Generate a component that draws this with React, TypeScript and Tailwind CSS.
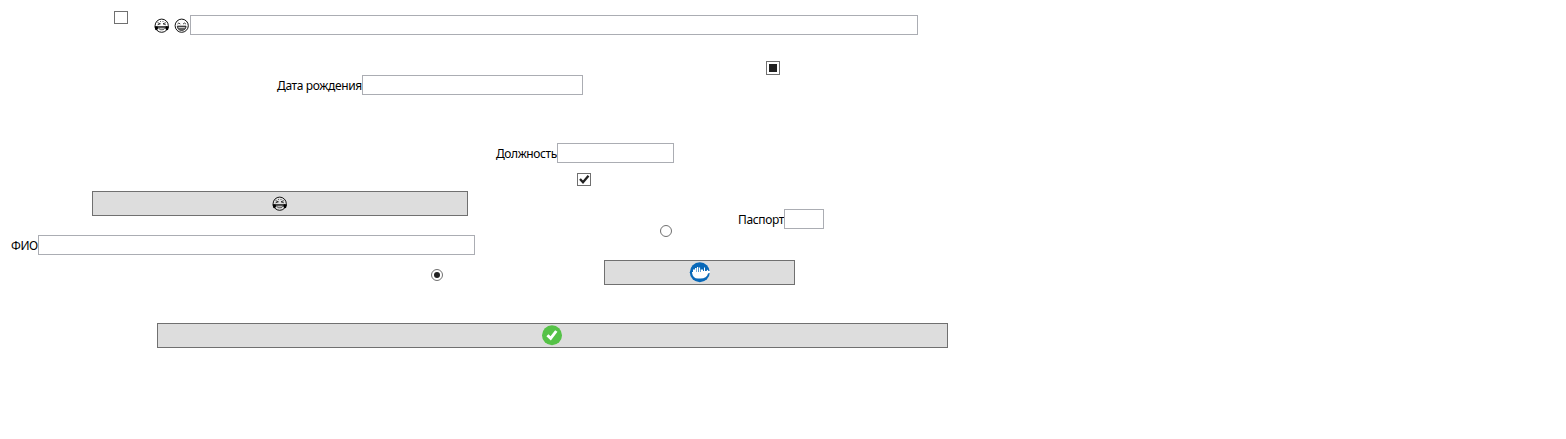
import React from "react";

const labelCls = "shrink-0 whitespace-nowrap text-[12px] leading-4";
const inputCls = "h-5 shrink-0 border border-[#abadb3] bg-white px-1 text-[12px] outline-none";
const buttonCls = "flex shrink-0 items-center justify-center border border-[#707070] bg-[#dddddd]";

function Laugh({ hands = false }: { hands?: boolean }) {
  return (
    <svg width="16" height="16" viewBox="0 0 16 16" fill="none" stroke="#111" className="shrink-0">
      <circle cx="7.700" cy="7.700" r="6.600" strokeWidth="1" />
      {hands ? (
        <>
          <path d="M3.600 4.700l2.800 1.100-2.800 1M11.800 4.700L9 5.800l2.800 1M6 3.500h.8M8.600 3.500h.8" strokeWidth=".8" />
          <path d="M.4 8.600l3-.5 1 1.600-1.300 2.600-1.700-.3zM15 8.600l-3-.5-1 1.600 1.300 2.600 1.700-.3z" fill="#000" stroke="none" />
          <path d="M3.400 8.200h8.600v1.200H3.400z" fill="#222" stroke="none" />
          <path d="M4.600 9.400h6.200c0 1.700-1.300 2.400-3.100 2.400s-3.100-.7-3.100-2.400z" fill="#bbb" strokeWidth=".6" />
        </>
      ) : (
        <>
          <path d="M3.500 6q1.200-1.900 2.800 0M9.100 6q1.200-1.900 2.800 0" strokeWidth=".8" />
          <path d="M3.300 8.100h8.800c0 2.800-1.800 4.400-4.400 4.400s-4.400-1.600-4.400-4.400z" fill="#666" strokeWidth=".7" />
          <path d="M4.500 9.500h6.400" stroke="#ddd" strokeWidth=".8" />
        </>
      )}
    </svg>
  );
}

function Radio({ checked = false, className }: { checked?: boolean; className: string }) {
  return (
    <svg width="14" height="14" viewBox="0 0 14 14" className={`shrink-0 ${className}`}>
      <circle cx="7" cy="7" r="5.500" fill="#fff" stroke="#707070" />
      {checked && <circle cx="7" cy="7" r="3" fill="#212121" />}
    </svg>
  );
}

export default function App() {
  return (
    <main className="flex h-[439px] w-[1566px] flex-col overflow-hidden bg-white font-['Noto_Sans','Open_Sans',sans-serif] text-black">
      <div className="flex h-[55px] items-start">
        <span className="ml-[114px] mt-[11px] h-[13px] w-[14px] border border-[#707070]" />
        <div className="ml-[26px] mt-[15px] flex">
          <div className="flex w-9 gap-1 pt-[3px]">
            <Laugh hands />
            <Laugh />
          </div>
          <input className={`${inputCls} w-[728px]`} />
        </div>
      </div>

      <div className="flex h-[45px] items-start">
        <label className="ml-[277px] mt-5 flex">
          <span className={`${labelCls} w-[85px] pt-[3px] tracking-[-0.37px]`}>Дата рождения</span>
          <input className={`${inputCls} w-[221px]`} />
        </label>
        <span className="ml-[183px] mt-1.5 flex size-[14px] items-center justify-center border border-[#707070]">
          <span className="size-2 bg-[#212121]" />
        </span>
      </div>

      <div className="flex h-[73px] items-start">
        <label className="ml-[496px] mt-[43px] flex">
          <span className={`${labelCls} w-[61px] pt-[3px] tracking-[-0.42px]`}>Должность</span>
          <input className={`${inputCls} w-[117px]`} />
        </label>
      </div>

      <div className="flex h-[15px] items-start">
        <span className="ml-[577px] flex h-[13px] w-[14px] border border-[#707070]">
          <svg width="12" height="11" viewBox="0 0 12 11" fill="none">
            <path d="M2 5l3 3.300L10.500 1.800" stroke="#212121" strokeWidth="2.300" />
          </svg>
        </span>
      </div>

      <div className="flex h-[47px] items-start">
        <button className={`${buttonCls} ml-[92px] mt-[3px] h-[25px] w-[376px]`}>
          <Laugh hands />
        </button>
        <Radio className="ml-[191px] mt-9" />
        <label className="ml-[65px] mt-[21px] flex">
          <span className={`${labelCls} w-[46px] pt-[3px] tracking-[-0.38px]`}>Паспорт</span>
          <input className={`${inputCls} w-10`} />
        </label>
      </div>

      <div className="flex h-[25px] items-start">
        <label className="ml-[11px] flex">
          <span className={`${labelCls} w-[27px] pt-[3px] tracking-[-0.4px]`}>ФИО</span>
          <input className={`${inputCls} w-[437px]`} />
        </label>
      </div>

      <div className="flex h-[63px] items-start">
        <Radio checked className="ml-[430px] mt-2" />
        <button className={`${buttonCls} ml-[160px] h-[25px] w-[191px] pb-px`}>
          <svg width="20" height="20" viewBox="0 0 20 20" className="shrink-0 overflow-visible">
            <circle cx="9.800" cy="10.300" r="10" fill="#0868b8" />
            <path d="M2 10h1V7.500h2V6h1.500v4H7V5h1.200v5h.7V5.500h1.200V10h.6V7.500h2.300V9h1V5.500h1V9h1.500l1-1.500 1 1.500H20v1.800l-2 .7c-.8 3.300-3.200 5-7.500 5H8c-3.500 0-5.500-2-6-6z" fill="#fff" />
          </svg>
        </button>
      </div>

      <div className="flex items-start">
        <button className={`${buttonCls} ml-[157px] h-[25px] w-[791px] pb-px pr-px`}>
          <svg width="20" height="20" viewBox="0 0 20 20" className="shrink-0 overflow-visible">
            <circle cx="10" cy="10.300" r="10" fill="#55c247" />
            <path d="M5.400 10.200l3.300 3.200 5.600-7.400" fill="none" stroke="#fff" strokeWidth="2.900" />
          </svg>
        </button>
      </div>
    </main>
  );
}
